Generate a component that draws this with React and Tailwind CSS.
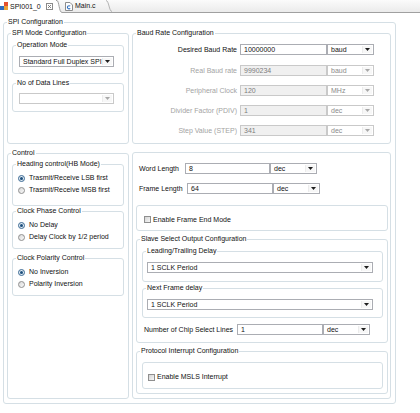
import React from "react";

// small SWT-like widgets

const Arrow = ({ color = "#1e1e1e" }) => (
  <svg width="5" height="3" viewBox="0 0 5 3">
    <path d="M0 0h5L2.5 3z" fill={color} />
  </svg>
);

const Group = ({ label, className = "", children }) => (
  <fieldset className={`border border-[#d5dfe5] rounded-[3px] min-w-0 ${className}`}>
    {label ? (
      <legend className="ml-[3px] px-[1px] text-[7px] leading-[10px] text-[#111] whitespace-nowrap">
        {label}
      </legend>
    ) : null}
    {children}
  </fieldset>
);

const TextBox = ({ value, disabled = false, className = "" }) => (
  <div
    className={`h-[11px] border pl-[3px] text-[7px] leading-[9px] whitespace-nowrap overflow-hidden ${
      disabled ? "border-[#c9c9c9] bg-[#f0f0f0] text-[#7d7d7d]" : "border-[#abadb3] bg-white text-[#111]"
    } ${className}`}
  >
    {value}
  </div>
);

const Combo = ({ value = "", disabled = false, className = "" }) => (
  <div
    className={`h-[11px] flex border bg-white ${
      disabled ? "border-[#c9c9c9] text-[#8a8a8a]" : "border-[#abadb3] text-[#111]"
    } ${className}`}
  >
    <span className="flex-1 pl-[3px] text-[7px] leading-[9px] whitespace-nowrap overflow-hidden">{value}</span>
    <span className="w-[10px] my-[1px] mr-[1px] flex items-center justify-center bg-[#f7f7f7] border-l border-[#ececec]">
      <Arrow color={disabled ? "#a8a8a8" : "#1e1e1e"} />
    </span>
  </div>
);

const Radio = ({ label, checked = false }) => (
  <div className="h-[12px] flex items-center pl-[5px]">
    {checked ? (
      <span className="w-[7px] h-[7px] rounded-full border border-[#3d6b94] bg-[#dfe9f2] flex items-center justify-center">
        <span className="w-[3px] h-[3px] rounded-full bg-[#1d4f7c]" />
      </span>
    ) : (
      <span className="w-[7px] h-[7px] rounded-full border border-[#8f8f8f] bg-gradient-to-br from-[#d8d8d8] to-[#fafafa]" />
    )}
    <span className="ml-[4px] leading-[12px]">{label}</span>
  </div>
);

const Check = ({ label }) => (
  <div className="flex items-center">
    <span className="w-[7px] h-[7px] border border-[#8f8f8f] bg-gradient-to-br from-[#d4d4d4] to-[#f7f7f7]" />
    <span className="ml-[2px] leading-[10px]">{label}</span>
  </div>
);

const BaudRow = ({ label, value, unit, disabled = false, className = "" }) => (
  <div className={`flex items-center h-[11px] ${className}`}>
    <span className={`w-[104px] text-right leading-[11px] whitespace-nowrap ${disabled ? "text-[#a3a3a3]" : "text-[#111]"}`}>
      {label}
    </span>
    <TextBox className="ml-[3px] w-[87px]" value={value} disabled={disabled} />
    <Combo className="w-[47px]" value={unit} disabled={disabled} />
  </div>
);

const Tabs = () => (
  <div className="h-[13px] flex items-end bg-gradient-to-b from-[#fbfbfb] to-[#ebebeb] border-b border-[#a0a0a0]">
    <div className="h-[13px] -mb-px w-[56px] bg-white flex items-center">
      <svg width="9" height="9" viewBox="0 0 9 9">
        <rect x="4" y="0" width="4" height="4" fill="#e4512f" />
        <rect x="0" y="4" width="4" height="4" fill="#2d6cc0" />
        <rect x="4" y="4" width="4" height="4" fill="#e8a23a" />
      </svg>
      <span className="ml-[1px] leading-[12px]">SPI001_0</span>
      <svg width="7" height="7" viewBox="0 0 7 7" className="ml-[5px]">
        <rect x="0.5" y="0.5" width="6" height="6" fill="none" stroke="#8a8a8a" />
        <path d="M2 2l3 3M5 2l-3 3" stroke="#6a6a6a" strokeWidth="0.8" />
      </svg>
    </div>
    <svg width="6" height="13" viewBox="0 0 6 13" className="-mb-px">
      <path d="M0 0H1C3 0 3 12 6 12V13H0Z" fill="#ffffff" />
      <path d="M0 0.5H1C3 0.5 3 12.5 6 12.5" fill="none" stroke="#a0a0a0" />
    </svg>
    <div className="h-[12px] w-[44px] flex items-center pl-[3px]">
      <svg width="8" height="9" viewBox="0 0 8 9">
        <path d="M0.5 0.5H5L7.5 3V8.5H0.5Z" fill="#fdfdfd" stroke="#8c8c8c" />
        <path d="M5.2 4.2A1.6 1.6 0 1 0 5.2 6.4" fill="none" stroke="#2f6fc0" strokeWidth="1.1" />
      </svg>
      <span className="ml-[2px] leading-[12px]">Main.c</span>
    </div>
    <svg width="6" height="12" viewBox="0 0 6 12">
      <path d="M0 0.5C3 0.5 3 11.5 6 11.5" fill="none" stroke="#b4b4b4" />
    </svg>
  </div>
);

export default function App() {
  return (
    <div className="w-[420px] h-[413px] bg-white overflow-hidden font-['Liberation_Sans',Arial,sans-serif] text-[7px] text-[#111]">
      <Tabs />
      <Group label="SPI Configuration" className="mt-[4px] ml-[3px] w-[393px] h-[387px]">
        <div className="flex flex-col pl-[3px]">
          {/* top row */}
          <div className="mt-[1px] flex gap-[3px]">
            <Group label="SPI Mode Configuration" className="w-[122px] h-[116px]">
              <Group label="Operation Mode" className="mt-[2px] ml-[4px] w-[112px] h-[34px]">
                <Combo className="mt-[6px] ml-[6px] w-[95px]" value="Standard Full Duplex SPI" />
              </Group>
              <Group label="No of Data Lines" className="mt-[4px] ml-[4px] w-[112px] h-[34px]">
                <Combo className="mt-[5px] ml-[6px] w-[95px]" disabled />
              </Group>
            </Group>

            <Group label="Baud Rate Configuration" className="w-[259px] h-[116px]">
              <BaudRow className="mt-[6px]" label="Desired Baud Rate" value="10000000" unit="baud" />
              <BaudRow className="mt-[10px]" label="Real Baud rate" value="9990234" unit="baud" disabled />
              <BaudRow className="mt-[9px]" label="Peripheral Clock" value="120" unit="MHz" disabled />
              <BaudRow className="mt-[9px]" label="Divider Factor (PDIV)" value="1" unit="dec" disabled />
              <BaudRow className="mt-[9px]" label="Step Value (STEP)" value="341" unit="dec" disabled />
            </Group>
          </div>

          {/* bottom row */}
          <div className="mt-[4px] flex gap-[3px] items-start">
            <Group label="Control" className="w-[122px] h-[251px]">
              <Group label="Heading control(HB Mode)" className="mt-[1px] ml-[4px] w-[112px] h-[47px]">
                <div className="mt-[3px]">
                  <Radio label="Trasmit/Receive LSB first" checked />
                  <Radio label="Trasmit/Receive MSB first" />
                </div>
              </Group>
              <Group label="Clock Phase Control" className="ml-[4px] w-[112px] h-[43px]">
                <div className="mt-[3px]">
                  <Radio label="No Delay" checked />
                  <Radio label="Delay Clock by 1/2 period" />
                </div>
              </Group>
              <Group label="Clock Polarity Control" className="mt-[4px] ml-[4px] w-[112px] h-[43px]">
                <div className="mt-[3px]">
                  <Radio label="No Inversion" checked />
                  <Radio label="Polarity Inversion" />
                </div>
              </Group>
            </Group>

            <div className="mt-[4px] w-[259px] h-[247px] border border-[#d5dfe5] rounded-[3px] flex flex-col">
              <div className="mt-[10px] flex items-center h-[11px]">
                <span className="w-[52px] pl-[6px] leading-[11px] whitespace-nowrap">Word Length</span>
                <TextBox className="w-[85px]" value="8" />
                <Combo className="w-[47px]" value="dec" />
              </div>
              <div className="mt-[9px] flex items-center h-[11px]">
                <span className="w-[54px] pl-[6px] leading-[11px] whitespace-nowrap">Frame Length</span>
                <TextBox className="w-[86px]" value="64" />
                <Combo className="w-[47px]" value="dec" />
              </div>

              <div className="mt-[11px] ml-[3px] w-[252px] h-[26px] border border-[#d5dfe5] rounded-[3px] flex items-center pl-[7px] pt-[3px]">
                <Check label="Enable Frame End Mode" />
              </div>

              <Group label="Slave Select Output Configuration" className="mt-[3px] ml-[3px] w-[252px] h-[109px]">
                <Group label="Leading/Trailing Delay" className="mt-[2px] ml-[5px] w-[241px] h-[36px]">
                  <Combo className="mt-[6px] ml-[4px] w-[226px]" value="1 SCLK Period" />
                </Group>
                <Group label="Next Frame delay" className="mt-[1px] ml-[5px] w-[241px] h-[35px]">
                  <Combo className="mt-[6px] ml-[4px] w-[226px]" value="1 SCLK Period" />
                </Group>
                <div className="mt-[6px] flex items-center h-[11px]">
                  <span className="w-[100px] pl-[7px] leading-[11px] whitespace-nowrap">Number of Chip Select Lines</span>
                  <TextBox className="w-[86px]" value="1" />
                  <Combo className="w-[47px]" value="dec" />
                </div>
              </Group>

              <Group label="Protocol Interrupt Configuration" className="mt-[3px] ml-[3px] w-[252px] h-[48px]">
                <div className="mt-[6px] ml-[5px] w-[241px] h-[27px] border border-[#d5dfe5] rounded-[3px] flex items-center pl-[5px] pt-[3px]">
                  <Check label="Enable MSLS Interrupt" />
                </div>
              </Group>
            </div>
          </div>
        </div>
      </Group>
    </div>
  );
}
